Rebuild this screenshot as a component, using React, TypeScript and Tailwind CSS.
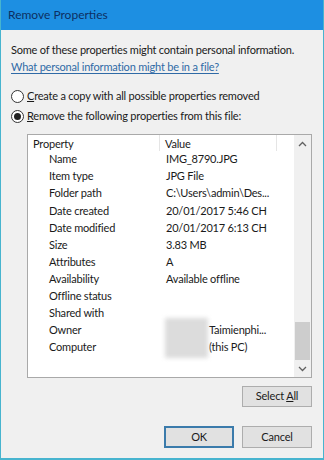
import React from 'react';

const rows: [string, string][] = [
  ['Name', 'IMG_8790.JPG'],
  ['Item type', 'JPG File'],
  ['Folder path', 'C:\\Users\\admin\\Des...'],
  ['Date created', '20/01/2017 5:46 CH'],
  ['Date modified', '20/01/2017 6:13 CH'],
  ['Size', '3.83 MB'],
  ['Attributes', 'A'],
  ['Availability', 'Available offline'],
  ['Offline status', ''],
  ['Shared with', ''],
  ['Owner', 'Taimienphi...'],
  ['Computer', '(this PC)'],
];

function Radio({ checked }: { checked?: boolean }) {
  return (
    <span className="w-[13px] h-[13px] rounded-full border border-[#333] bg-white flex items-center justify-center shrink-0">
      {checked && <span className="w-[7px] h-[7px] rounded-full bg-[#222]" />}
    </span>
  );
}

function Chevron({ up }: { up?: boolean }) {
  return (
    <svg width="9" height="6" viewBox="0 0 9 6" className="block">
      <path d={up ? 'M1 5 L4.5 1.5 L8 5' : 'M1 1 L4.5 4.5 L8 1'} fill="none" stroke="#606060" strokeWidth="1.3" />
    </svg>
  );
}

export default function App() {
  return (
    <div
      className="w-[324px] h-[460px] flex flex-col bg-[#f0f0f0] border-x border-b-2 border-[#47b4cf] text-[11px] tracking-[-0.2px] text-[#1a1a1a] overflow-hidden whitespace-nowrap"
      style={{ fontFamily: 'Lato, "Noto Sans", sans-serif' }}
    >
      {/* title bar */}
      <div className="h-[30px] bg-[#1d8fe2] flex items-center px-[7px] text-[12px] tracking-[0px] text-[#0d2f63] shrink-0">
        Remove Properties
      </div>

      <div className="flex flex-col px-[10px]">
        <p className="mt-[11px] leading-[17px]">Some of these properties might contain personal information.</p>
        <a className="leading-[17px] text-[#2f6aa6] underline underline-offset-2">What personal information might be in a file?</a>

        <div className="mt-[11px] flex items-center gap-[3px] h-[20px]">
          <Radio />
          <span><u>C</u>reate a copy with all possible properties removed</span>
        </div>
        <div className="flex items-center gap-[3px] h-[20px]">
          <Radio checked />
          <span><u>R</u>emove the following properties from this file:</span>
        </div>

        {/* list box */}
        <div className="mt-[8px] ml-[16px] mr-[1px] h-[244px] bg-white border border-[#a9a9a9] flex">
          <div className="flex-1 flex flex-col">
            <div className="h-[16px] flex">
              <div className="w-[132px] pl-[5px] pt-[3px] border-r border-[#e5e5e5] h-full flex items-center">Property</div>
              <div className="w-[117px] pl-[5px] pt-[3px] border-r border-[#e5e5e5] h-full flex items-center">Value</div>
            </div>
            {rows.map(([k, v]) => (
              <div key={k} className="h-[17.1px] flex items-center">
                <div className="w-[138px] pl-[21px]">{k}</div>
                {k === 'Owner' ? (
                  <div className="relative pl-[43px]">
                    <span className="absolute left-[-1px] top-[-4px] w-[43px] h-[40px] bg-[#dcdcdc] blur-[2px]" />
                    <span>{v}</span>
                  </div>
                ) : k === 'Computer' ? (
                  <div className="pl-[43px]">{v}</div>
                ) : (
                  <div>{v}</div>
                )}
              </div>
            ))}
          </div>
          {/* scrollbar */}
          <div className="w-[17px] bg-[#f0f0f0] flex flex-col items-center">
            <div className="h-[17px] flex items-center justify-center">
              <Chevron up />
            </div>
            <div className="flex-1 w-full px-[1px] flex flex-col justify-end">
              <div className="h-[38px] bg-[#cdcdcd]" />
            </div>
            <div className="h-[17px] flex items-center justify-center">
              <Chevron />
            </div>
          </div>
        </div>

        <div className="mt-[8px] flex justify-end mr-[1px]">
          <button className="w-[70px] h-[21px] bg-[#e1e1e1] border border-[#adadad]">
            Select <u>A</u>ll
          </button>
        </div>

        <div className="mt-[19px] flex justify-end gap-[8px] mr-[1px]">
          <button className="w-[70px] h-[22px] bg-[#e1e1e1] border-2 border-[#3b7bab]">OK</button>
          <button className="w-[70px] h-[22px] bg-[#e1e1e1] border border-[#adadad]">Cancel</button>
        </div>
      </div>
    </div>
  );
}
